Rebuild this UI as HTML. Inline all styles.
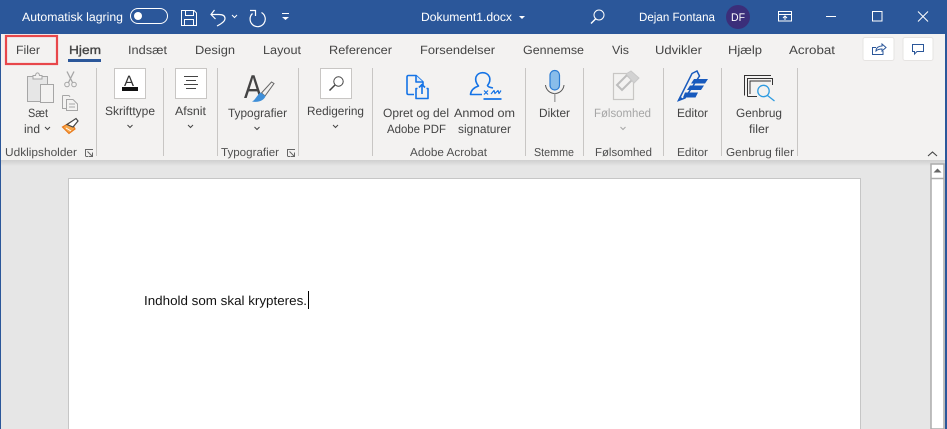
<!DOCTYPE html>
<html><head><meta charset="utf-8"><style>
html,body{margin:0;padding:0;width:947px;height:429px;overflow:hidden;background:#e6e6e6}
svg{display:block}
text{font-family:"Liberation Sans",sans-serif;font-size:12px;fill:#444}
.w text{fill:#fff}
.g{fill:#a6a6a6}
.s{font-size:11.5px;fill:#505050}
.sep{stroke:#c8c6c4;stroke-width:1}
</style></head><body>
<svg width="947" height="429" viewBox="0 0 947 429" xmlns="http://www.w3.org/2000/svg" text-rendering="geometricPrecision">
<defs><linearGradient id="sh" x1="0" y1="0" x2="0" y2="1"><stop offset="0" stop-color="#cfcfcf"/><stop offset="1" stop-color="#e6e6e6"/></linearGradient></defs>
<rect width="947" height="429" fill="#e6e6e6"/>
<rect y="34" width="947" height="126" fill="#f3f2f1"/>
<rect y="160" width="947" height="6" fill="url(#sh)"/>
<rect width="947" height="34" fill="#2b579a"/>
<rect width="1" height="429" fill="#2b579a"/>
<rect x="945" width="2" height="429" fill="#2b579a"/>

<!-- title bar -->
<g class="w">
<text x="22" y="21" textLength="101" lengthAdjust="spacingAndGlyphs">Automatisk lagring</text>
<text x="421" y="21" textLength="91" lengthAdjust="spacingAndGlyphs">Dokument1.docx</text>
<text x="639" y="21" textLength="76" lengthAdjust="spacingAndGlyphs">Dejan Fontana</text>
</g>
<rect x="130.5" y="8.5" width="37" height="15" rx="7.5" fill="none" stroke="#fff"/>
<circle cx="138" cy="16" r="4" fill="#fff"/>
<g fill="none" stroke="#fff" stroke-width="1">
<path d="M181.500 10.500H194L196.500 13V25.500H181.500Z"/>
<path d="M185.500 10.500V15.500H193.500V10.500M184.500 25.500V19.500H193.500V25.500"/>
<path d="M214.500 10L211 14.500L215.500 19M211 14.500H219C223 14.500 225 16 225 18.500C225 21 222 23.500 217 26" stroke-width="1.200"/>
<path d="M232 15L234.500 17.500L237 15"/>
<path d="M261.500 12.500A7.600 7.600 0 1 1 252.500 13.500" stroke-width="1.200"/>
<path d="M250 10.500H255.500V16" stroke-width="1.200"/>
<path d="M282 13.500H289"/>
<path d="M591 23.500L596 18.500" stroke-width="1.400"/>
<circle cx="599" cy="15" r="5"/>
<rect x="778.500" y="11.500" width="13" height="9.500"/>
<path d="M778.500 14.500H791.500M785 20V16.500M783 18L785 16L787 18"/>
<path d="M826 16.500H836"/>
<rect x="872.500" y="11.500" width="9.500" height="9.500"/>
<path d="M918 11.500L928 21.500M928 11.500L918 21.500"/>
</g>
<path d="M519 16H525L522 19Z" fill="#fff"/>
<path d="M282 17H289L285.500 20Z" fill="#fff"/>
<circle cx="738" cy="17" r="12" fill="#3b2e7a"/>
<text x="731" y="21" style="fill:#fff;font-size:11px" textLength="14" lengthAdjust="spacingAndGlyphs">DF</text>

<!-- tabs -->
<rect x="6" y="36" width="51" height="28" fill="none" stroke="#e8474b" stroke-width="2.200"/>
<text x="16" y="54" textLength="24" lengthAdjust="spacingAndGlyphs">Filer</text>
<text x="69" y="54" textLength="32" lengthAdjust="spacingAndGlyphs" style="fill:#444;stroke:#444;stroke-width:.35">Hjem</text>
<rect x="68" y="59" width="33" height="3" fill="#2b579a"/>
<text x="128" y="54" textLength="39" lengthAdjust="spacingAndGlyphs">Indsæt</text>
<text x="195" y="54" textLength="40" lengthAdjust="spacingAndGlyphs">Design</text>
<text x="263" y="54" textLength="38" lengthAdjust="spacingAndGlyphs">Layout</text>
<text x="329" y="54" textLength="63" lengthAdjust="spacingAndGlyphs">Referencer</text>
<text x="420" y="54" textLength="75" lengthAdjust="spacingAndGlyphs">Forsendelser</text>
<text x="523" y="54" textLength="61" lengthAdjust="spacingAndGlyphs">Gennemse</text>
<text x="612" y="54" textLength="17" lengthAdjust="spacingAndGlyphs">Vis</text>
<text x="655" y="54" textLength="47" lengthAdjust="spacingAndGlyphs">Udvikler</text>
<text x="728" y="54" textLength="34" lengthAdjust="spacingAndGlyphs">Hjælp</text>
<text x="789" y="54" textLength="46" lengthAdjust="spacingAndGlyphs">Acrobat</text>

<rect x="863" y="37.500" width="31" height="23" rx="2" fill="#fff" stroke="#e6e4e2"/>
<rect x="903" y="37.500" width="30" height="23" rx="2" fill="#fff" stroke="#e6e4e2"/>
<path d="M876 47.500H872.500V54.500H883V51M876 51C876 47.500 879 46 882 46V44L886 47.500L882 51V49C880 49 877.500 49.500 876 51Z" fill="none" stroke="#2b579a" stroke-width="1"/>
<path d="M912.500 44.500H923.500V51.500H917L914.500 54V51.500H912.500Z" fill="none" stroke="#2b579a"/>

<!-- separators -->
<g class="sep">
<path d="M96.500 68V156M163.500 68V156M217.500 68V156M298.500 68V156M372.500 68V156M525.500 68V156M583.500 68V156M663.500 68V156M721.500 68V156M797.500 68V156" stroke="#c8c6c4"/>
</g>

<!-- Paste -->
<path d="M27.500 76.500H47.500V101.500H27.500Z" fill="#e6e6e6" stroke="#a6a6a6"/>
<path d="M33 79V75.500H35.500C36 72 39 72 39.500 75.500H42V79Z" fill="#f3f2f1" stroke="#a6a6a6"/>
<rect x="40.500" y="84.500" width="13" height="18" fill="#f3f2f1" stroke="#a6a6a6"/>
<!-- Cut -->
<g fill="none" stroke="#a6a6a6">
<path d="M67 71.500L72.500 82.500M74 71.500L68.500 82.500" stroke-width="1.300"/>
<circle cx="67" cy="84.500" r="2.300"/><circle cx="74" cy="84.500" r="2.300"/>
<!-- Copy -->
<path d="M62.500 95.500H69L70 97M62.500 95.500V108.500H66"/>
<path d="M66.500 99.500H73L77.500 104V110.500H66.500ZM69 104H75M69 107H75"/>
</g>
<!-- Painter -->
<path d="M62.500 127L71 122L75 129L69 133.500Z" fill="#f7a64a" stroke="#e8791c" stroke-width="1.200"/>
<path d="M67 124.500L76 118.500L78 121L73 127Z" fill="#fff" stroke="#444" stroke-width="1.200"/>
<path d="M66 128L71 131" stroke="#fff"/>

<!-- Skrifttype -->
<rect x="114.500" y="68.500" width="31" height="30" fill="#fff" stroke="#c8c6c4"/>
<text x="124" y="86" style="font-size:15px;fill:#333">A</text>
<rect x="122" y="87" width="16" height="4" fill="#111"/>
<!-- Afsnit -->
<rect x="175.500" y="68.500" width="31" height="30" fill="#fff" stroke="#c8c6c4"/>
<path d="M184 76.500H198M186 80.500H196M184 84.500H198M186 88.500H196" stroke="#444" fill="none"/>
<!-- Typografier -->
<text x="244" y="98" style="font-size:33px;fill:#444" textLength="18" lengthAdjust="spacingAndGlyphs">A</text>
<path d="M261.500 93L271.500 82L274 83.500L265 96Z" fill="#f3f2f1" stroke="#666"/>
<path d="M260.500 92.500L265.500 96C264.500 100 259 103 252 101.500C255.500 100 257 95 260.500 92.500Z" fill="#3f8fd8"/>
<!-- Redigering -->
<rect x="320.500" y="68.500" width="31" height="30" fill="#fff" stroke="#c8c6c4"/>
<circle cx="338.500" cy="81.500" r="4.700" fill="none" stroke="#444"/>
<path d="M335 85L329.500 90.500" stroke="#444" stroke-width="1.500"/>

<!-- PDF -->
<g fill="none" stroke="#1473e6" stroke-width="1.600" stroke-linejoin="round">
<path d="M414 94.500H408.500C407.500 94.500 407 94 407 93V77C407 76 407.500 75.500 408.500 75.500H416L423 82V85"/>
<path d="M416 75.500V82H423" fill="#dbe9f9"/>
<path d="M417.500 88.500H416V98.500H428V88.500H426.500"/>
<path d="M422 94V84.500M419 87.500L422 84.500L425 87.500"/>
</g>
<!-- Signature -->
<g fill="none" stroke="#1473e6" stroke-width="1.600" stroke-linejoin="round">
<path d="M482 94.500H470.500C471 90 474 87.500 478.500 86C476 83 475 80 476 77C478 71.500 487 71 489.500 77C490.500 80 489.500 83 487.500 85.500C488 87 490 87.500 493 88"/>
<path d="M484 90.500L488 94.500M488 90.500L484 94.500" stroke-width="1.200"/>
<path d="M491 94L494 90.500L495 93.500L498 90.500L499 93.500L501 90.500" stroke-width="1.200"/>
<path d="M483.500 99H501.500" stroke-width="1.800"/>
</g>
<!-- Mic -->
<rect x="550" y="70.500" width="9.500" height="19.500" rx="4.700" fill="#89bdea" stroke="#2b7cd3" stroke-width="1.200"/>
<path d="M545.500 85C546 90 550 93.500 554.800 93.500C559.500 93.500 563.500 90 564 85" fill="none" stroke="#555"/>
<path d="M554.800 93.500V102" stroke="#a6a6a6" stroke-width="1.500"/>

<!-- Sensitivity -->
<rect x="613.500" y="73.500" width="20" height="26" fill="#f3f2f1" stroke="#c8c6c4" stroke-width="1.200"/>
<path d="M617 85L627 75L632 80L622 90Z" fill="#f3f2f1" stroke="#bdbdbd" stroke-width="2"/>
<path d="M626 74L631 71L639 78L634 83Z" fill="#d2d2d2" stroke="#c8c8c8"/>
<!-- Editor -->
<path d="M678.500 100.500L692 73.500L697 71L699.500 76L685 98Z" fill="#f3f2f1" stroke="#185abd" stroke-width="1.500"/>
<path d="M694 79H708L705 83.500H691ZM690 85.500H704L701 90H687ZM685 92.500H698L695.500 97.500H683Z" fill="#185abd"/>
<path d="M677.500 101L680 96L683 99Z" fill="#185abd"/>
<!-- Reuse -->
<g fill="none" stroke="#333">
<path d="M744.500 95.500V75.500H771"/>
<path d="M747.500 96.500V78.500H772.500V85M747.500 96.500H757"/>
<path d="M750 94V81H771"/>
</g>
<circle cx="763.500" cy="91" r="5.700" fill="#f3f2f1" stroke="#2e9be0" stroke-width="1.300"/>
<path d="M767.500 95.500L774.500 101" stroke="#2e9be0" stroke-width="1.300"/>

<!-- Labels -->
<text x="28" y="117" textLength="20" lengthAdjust="spacingAndGlyphs">Sæt</text>
<text x="24" y="133" textLength="16" lengthAdjust="spacingAndGlyphs">ind</text>
<text x="105" y="115" textLength="50" lengthAdjust="spacingAndGlyphs">Skrifttype</text>
<text x="175" y="115" textLength="31" lengthAdjust="spacingAndGlyphs">Afsnit</text>
<text x="228" y="117" textLength="59" lengthAdjust="spacingAndGlyphs">Typografier</text>
<text x="307" y="115" textLength="57" lengthAdjust="spacingAndGlyphs">Redigering</text>
<text x="383" y="117" textLength="66" lengthAdjust="spacingAndGlyphs">Opret og del</text>
<text x="387" y="133" textLength="59" lengthAdjust="spacingAndGlyphs">Adobe PDF</text>
<text x="454" y="117" textLength="61" lengthAdjust="spacingAndGlyphs">Anmod om</text>
<text x="458" y="133" textLength="53" lengthAdjust="spacingAndGlyphs">signaturer</text>
<text x="539" y="117" textLength="31" lengthAdjust="spacingAndGlyphs">Dikter</text>
<text x="594" y="117" textLength="57" lengthAdjust="spacingAndGlyphs" class="g">Følsomhed</text>
<text x="677" y="117" textLength="31" lengthAdjust="spacingAndGlyphs">Editor</text>
<text x="736" y="117" textLength="46" lengthAdjust="spacingAndGlyphs">Genbrug</text>
<text x="749" y="133" textLength="20" lengthAdjust="spacingAndGlyphs">filer</text>

<!-- chevrons -->
<g fill="none" stroke="#444">
<path d="M45 127L47.500 129.500L50 127M127.500 125L130 127.500L132.500 125M188 125L190.500 127.500L193 125M254.500 127L257 129.500L259.500 127M333 125L335.500 127.500L338 125"/>
<path d="M620.500 127L623 129.500L625.500 127" stroke="#a6a6a6"/>
<path d="M928 156L932.500 152L937 156" stroke-width="1.100"/>
<path d="M85.500 156V149.500H93M85.500 156.500H88M87.500 151.500L92 156M92.500 152.500V156.500H88.500" stroke="#666"/>
<path d="M287.500 156V149.500H295M287.500 156.500H290M289.500 151.500L294 156M294.500 152.500V156.500H290.500" stroke="#666"/>
</g>

<!-- Group labels -->
<text class="s" x="5" y="156" textLength="72" lengthAdjust="spacingAndGlyphs">Udklipsholder</text>
<text class="s" x="221" y="156" textLength="58" lengthAdjust="spacingAndGlyphs">Typografier</text>
<text class="s" x="410" y="156" textLength="77" lengthAdjust="spacingAndGlyphs">Adobe Acrobat</text>
<text class="s" x="534" y="156" textLength="40" lengthAdjust="spacingAndGlyphs">Stemme</text>
<text class="s" x="595" y="156" textLength="57" lengthAdjust="spacingAndGlyphs">Følsomhed</text>
<text class="s" x="677" y="156" textLength="31" lengthAdjust="spacingAndGlyphs">Editor</text>
<text class="s" x="726" y="156" textLength="68" lengthAdjust="spacingAndGlyphs">Genbrug filer</text>

<!-- Document -->
<rect x="68.500" y="178.500" width="792" height="260" fill="#fff" stroke="#c6c6c6"/>
<text x="144" y="305" style="font-size:13px;fill:#111" textLength="163" lengthAdjust="spacingAndGlyphs">Indhold som skal krypteres.</text>
<rect x="308" y="291" width="1" height="18" fill="#000"/>

<!-- Scrollbar -->
<rect x="931" y="164" width="13" height="265" fill="#fff" stroke="#ababab" stroke-width="1.500"/>
<path d="M931 178.500H944" stroke="#ababab" stroke-width="1.500"/>
<path d="M933.500 172.500L937.500 168.500L941.500 172.500Z" fill="#666"/>
</svg>
</body></html>
